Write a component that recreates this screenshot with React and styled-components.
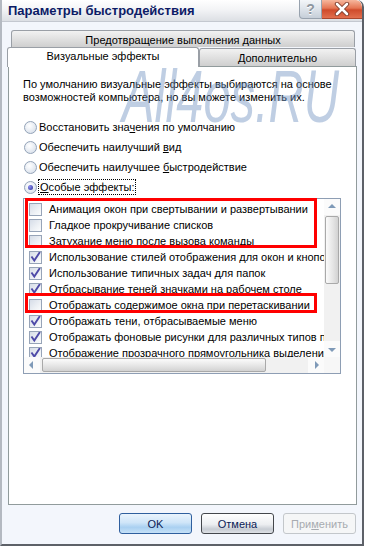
import styled, { createGlobalStyle } from "styled-components";

const GlobalStyle = createGlobalStyle`
  html, body { margin: 0; padding: 0; background: #ffffff; }
  body {
    font-family: "Liberation Sans", Arial, sans-serif;
    font-size: 11px;
    color: #000;
  }
  * { box-sizing: border-box; }
`;

const effects = [
  { label: "Анимация окон при свертывании и развертывании", on: false },
  { label: "Гладкое прокручивание списков", on: false },
  { label: "Затухание меню после вызова команды", on: false },
  { label: "Использование стилей отображения для окон и кнопок", on: true },
  { label: "Использование типичных задач для папок", on: true },
  { label: "Отбрасывание теней значками на рабочем столе", on: true },
  { label: "Отображать содержимое окна при перетаскивании", on: false },
  { label: "Отображать тени, отбрасываемые меню", on: true },
  { label: "Отображать фоновые рисунки для различных типов папок", on: true },
  { label: "Отображение прозрачного прямоугольника выделения", on: true },
];

function Arrow({ dir }) {
  const pts = {
    up: "4,9 8,5 12,9",
    down: "4,7 8,11 12,7",
    left: "9,4 5,8 9,12",
    right: "7,4 11,8 7,12",
  }[dir];
  return (
    <svg width="16" height="16" viewBox="0 0 16 16">
      <polygon points={pts} fill="#7f9ab8" />
    </svg>
  );
}

function CheckMark() {
  return (
    <svg width="11" height="11" viewBox="0 0 11 11">
      <path d="M2 5.2 L4.3 8.6 L9.4 0.8" fill="none" stroke="#4e4aa8" strokeWidth="1.9" strokeLinecap="square" />
    </svg>
  );
}

export default function App() {
  return (
    <>
      <GlobalStyle />
      <Window>
        <TitleBar>
          <Title>Параметры быстродействия</Title>
          <Controls>
            <HelpButton>?</HelpButton>
            <CloseButton>
              <svg width="16" height="14" viewBox="0 0 16 14">
                <path d="M3 2 L13 12 M13 2 L3 12" stroke="#7a3a2a" strokeWidth="4.4" strokeLinecap="round" />
                <path d="M3 2 L13 12 M13 2 L3 12" stroke="#ffffff" strokeWidth="2.6" strokeLinecap="round" />
              </svg>
            </CloseButton>
          </Controls>
        </TitleBar>

        <Body>
          <TabStrip>
            <TabRow>
              <BackTab $wide>Предотвращение выполнения данных</BackTab>
            </TabRow>
            <TabRow $front>
              <ActiveTab>Визуальные эффекты</ActiveTab>
              <BackTab>Дополнительно</BackTab>
            </TabRow>
          </TabStrip>

          <Panel>
            <Description>
              По умолчанию визуальные эффекты выбираются на основе
              <br />
              возможностей компьютера, но вы можете изменить их.
            </Description>

            <RadioGroup>
              <RadioRow>
                <Radio />
                <span>Восстановить зна<u>ч</u>ения по умолчанию</span>
              </RadioRow>
              <RadioRow>
                <Radio />
                <span>Обеспечить наилучший <u>в</u>ид</span>
              </RadioRow>
              <RadioRow>
                <Radio />
                <span>Обеспечить наилучшее <u>б</u>ыстродействие</span>
              </RadioRow>
              <RadioRow>
                <Radio $checked />
                <Focused><u>О</u>собые эффекты:</Focused>
              </RadioRow>
            </RadioGroup>

            <ListBox>
              <ListItems>
                {effects.map((e) => (
                  <Item key={e.label}>
                    <CheckBox>{e.on && <CheckMark />}</CheckBox>
                    <span>{e.label}</span>
                  </Item>
                ))}
              </ListItems>

              <VScroll>
                <ArrowCell><Arrow dir="up" /></ArrowCell>
                <VTrack>
                  <VThumb />
                </VTrack>
                <ArrowCell><Arrow dir="down" /></ArrowCell>
              </VScroll>

              <HScroll>
                <ArrowCell><Arrow dir="left" /></ArrowCell>
                <HTrack>
                  <HThumb />
                </HTrack>
                <ArrowCell><Arrow dir="right" /></ArrowCell>
              </HScroll>

              <Corner />

              <Highlight $top={0} $height={50} />
              <Highlight $top={95} $height={20} />
            </ListBox>
          </Panel>

          <ButtonRow>
            <Button $variant="default">OK</Button>
            <Button>Отмена</Button>
            <Button $variant="disabled">При<u>м</u>енить</Button>
          </ButtonRow>
        </Body>

        <Watermark>All4os.RU</Watermark>
      </Window>
    </>
  );
}

/* ===============================
   Window frame
================================ */

const Window = styled.div`
  position: relative;
  width: 364px;
  height: 546px;
  display: flex;
  flex-direction: column;
  background: #f3f6fc;
  border-left: 2px solid #b4b9c1;
  border-right: 2px solid #5d6168;
  border-bottom: 2px solid #5d6168;
  border-top-right-radius: 7px;
  overflow: hidden;
`;

const TitleBar = styled.div`
  flex: none;
  height: 22px;
  display: flex;
  align-items: center;
  background: linear-gradient(#ffffff, #f3f4f6 45%, #dcdfe4);
  border-bottom: 1px solid #c4c8d0;
`;

const Title = styled.div`
  padding-left: 6px;
  font-size: 13px;
  font-weight: 700;
  color: #0c1b66;
`;

const Controls = styled.div`
  margin-left: auto;
  align-self: flex-start;
  display: flex;
`;

const HelpButton = styled.div`
  width: 23px;
  height: 19px;
  display: flex;
  align-items: center;
  justify-content: center;
  border: 1px solid #98a2ae;
  border-top: none;
  border-bottom-left-radius: 4px;
  background: linear-gradient(#f4f6f9, #dde3ea 50%, #c6ced8);
  font-size: 14px;
  font-weight: 700;
  color: #8e969f;
  text-shadow: 0 1px 0 #ffffff;
`;

const CloseButton = styled.div`
  width: 40px;
  height: 19px;
  display: flex;
  align-items: center;
  justify-content: center;
  border-bottom: 1px solid #a9472e;
  border-top-right-radius: 6px;
  background: linear-gradient(#f6b79d, #e57654 45%, #cf4b2b 55%, #e26f4e);
`;

const Body = styled.div`
  flex: 1;
  padding: 8px 0 0 6px;
  display: flex;
  flex-direction: column;
`;

/* ===============================
   Tabs
================================ */

const TabStrip = styled.div`
  width: 349px;
  display: flex;
  flex-direction: column;
`;

const TabRow = styled.div`
  display: flex;
  align-items: flex-end;
  height: ${({ $front }) => ($front ? "20px" : "17px")};
  padding-left: ${({ $front }) => ($front ? "0" : "3px")};
  margin-bottom: ${({ $front }) => ($front ? "-1px" : "0")};
`;

const BackTab = styled.div`
  width: ${({ $wide }) => ($wide ? "344px" : "157px")};
  height: ${({ $wide }) => ($wide ? "17px" : "18px")};
  margin-bottom: ${({ $wide }) => ($wide ? "0" : "1px")};
  display: flex;
  align-items: center;
  justify-content: center;
  border: 1px solid #9a9fa6;
  border-bottom: none;
  border-radius: 3px 3px 0 0;
  background: linear-gradient(#f2f2f2, #e2e2e2 45%, #cfcfcf);
  padding-top: 1px;
`;

const ActiveTab = styled.div`
  position: relative;
  z-index: 2;
  width: 192px;
  height: 20px;
  margin-left: -1px;
  display: flex;
  align-items: flex-start;
  justify-content: center;
  padding-top: 2px;
  background: #ffffff;
  border: 1px solid #9a9fa6;
  border-bottom: none;
  border-radius: 3px 3px 0 0;
`;

const Panel = styled.div`
  width: 349px;
  height: 439px;
  background: #ffffff;
  border: 1px solid #919b9c;
  padding: 11px 14px 0 14px;
  display: flex;
  flex-direction: column;
`;

const Description = styled.div`
  line-height: 13px;
  white-space: nowrap;
`;

/* ===============================
   Radios
================================ */

const RadioGroup = styled.div`
  margin-top: 13px;
  display: flex;
  flex-direction: column;
`;

const RadioRow = styled.div`
  height: 20px;
  display: flex;
  align-items: center;
  gap: 2px;
  padding-left: 1px;
`;

const Radio = styled.div`
  width: 13px;
  height: 13px;
  flex: none;
  border-radius: 50%;
  border: 1px solid #93a3b8;
  background: radial-gradient(circle at 40% 35%, #ffffff, #dfe5ee 70%, #c9d2de);
  display: flex;
  align-items: center;
  justify-content: center;

  &::after {
    content: "";
    display: ${({ $checked }) => ($checked ? "block" : "none")};
    width: 5px;
    height: 5px;
    border-radius: 50%;
    background: radial-gradient(circle at 35% 35%, #8c8ff0, #2a2d98);
  }
`;

const Focused = styled.span`
  outline: 1px dotted #000;
  outline-offset: 0;
  padding: 0 1px;
  line-height: 14px;
`;

/* ===============================
   List box
================================ */

const ListBox = styled.div`
  position: relative;
  margin-top: 1px;
  width: 318px;
  height: 176px;
  border: 1px solid #8e9eb4;
  display: grid;
  grid-template-columns: 1fr 16px;
  grid-template-rows: 1fr 16px;
`;

const ListItems = styled.div`
  overflow: hidden;
  padding-top: 2px;
  white-space: nowrap;
`;

const Item = styled.div`
  height: 16px;
  display: flex;
  align-items: center;
  gap: 7px;
  padding-left: 5px;
`;

const CheckBox = styled.div`
  width: 13px;
  height: 13px;
  flex: none;
  border: 1px solid #97a4b8;
  background: linear-gradient(135deg, #d6dde8, #eef1f5 60%, #fbfcfd);
  display: flex;
  align-items: center;
  justify-content: center;
`;

const VScroll = styled.div`
  display: flex;
  flex-direction: column;
  background: #f1f1f1;
`;

const HScroll = styled.div`
  display: flex;
  background: #f1f1f1;
`;

const ArrowCell = styled.div`
  width: 16px;
  height: 16px;
  flex: none;
  background: #fbfbfb;
`;

const VTrack = styled.div`
  flex: 1;
  padding: 1px 1px 0;
`;

const VThumb = styled.div`
  height: 68px;
  border: 1px solid #a9a9a9;
  border-radius: 2px;
  background: linear-gradient(90deg, #fbfbfb, #e6e6e6 55%, #d2d2d2);
`;

const HTrack = styled.div`
  flex: 1;
  padding: 1px 0 1px 2px;
`;

const HThumb = styled.div`
  width: 224px;
  height: 14px;
  border: 1px solid #a9a9a9;
  border-radius: 2px;
  background: linear-gradient(#fbfbfb, #e6e6e6 55%, #d2d2d2);
`;

const Corner = styled.div`
  background: #f7f7f7;
`;

const Highlight = styled.div`
  position: absolute;
  left: 1px;
  top: ${({ $top }) => $top - 1}px;
  width: 292px;
  height: ${({ $height }) => $height}px;
  border: 3px solid #ff0000;
  pointer-events: none;
`;

/* ===============================
   Buttons
================================ */

const ButtonRow = styled.div`
  margin-top: 8px;
  width: 349px;
  display: flex;
  justify-content: flex-end;
  gap: 9px;
  padding-right: 1px;
`;

const variants = {
  default: `
    border-color: #2f5f9e;
    background: linear-gradient(#eaf4fd, #cfe5f8 45%, #a9d0f1 70%, #c6e1f7);
    color: #0a1a55;
  `,
  normal: `
    border-color: #44474c;
    background: linear-gradient(#ffffff, #eceef1 55%, #c7ccd3 80%, #dfe2e6);
    color: #0a1a55;
  `,
  disabled: `
    border-color: #c3c7cb;
    background: #f5f6f7;
    color: #a7abb0;
  `,
};

const Button = styled.div`
  width: 73px;
  height: 21px;
  display: flex;
  align-items: center;
  justify-content: center;
  border: 1px solid;
  border-radius: 3px;
  ${({ $variant }) => variants[$variant || "normal"]}
`;

/* ===============================
   Watermark overlay
================================ */

const Watermark = styled.div`
  position: absolute;
  left: 120px;
  top: 60px;
  font-size: 74px;
  line-height: 1;
  font-style: italic;
  color: rgba(112, 146, 192, 0.45);
  transform: scaleX(0.66);
  transform-origin: left top;
  white-space: nowrap;
  pointer-events: none;
`;
